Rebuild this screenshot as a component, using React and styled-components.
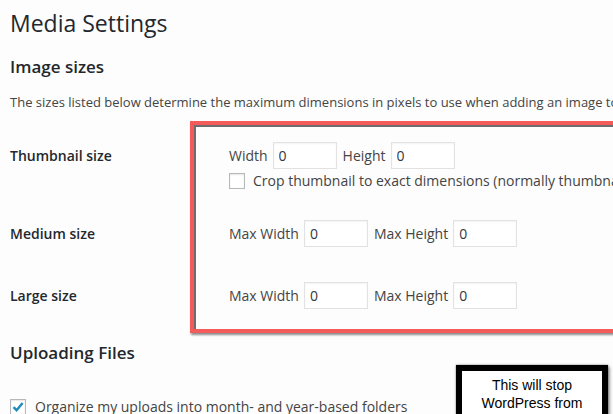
import React from "react";
import styled, { createGlobalStyle } from "styled-components";

const GlobalStyle = createGlobalStyle`
  html, body {
    margin: 0;
    padding: 0;
    overflow: hidden;
    background: #fdfdfd;
  }
  body {
    font-family: "Open Sans", "Liberation Sans", sans-serif;
    color: #444;
  }
`;

const Page = styled.div`
  position: relative;
  width: 900px;
  padding: 8px 0 0 10px;
  box-sizing: border-box;
`;

const Title = styled.h1`
  margin: 0;
  font-size: 23px;
  line-height: 30px;
  font-weight: 400;
  color: #23282d;
`;

const SectionTitle = styled.h2`
  margin: ${(p) => p.$mt}px 0 0;
  font-size: 17px;
  line-height: 24px;
  font-weight: 600;
  color: #23282d;
`;

const Description = styled.p`
  margin: 14px 0 0;
  font-size: 13px;
  line-height: 18px;
  white-space: nowrap;
`;

const FormGrid = styled.div`
  display: grid;
  grid-template-columns: 180px 1fr;
  margin-top: 10px;
`;

const Highlight = styled.div`
  grid-column: 2;
  grid-row: 1 / 4;
  border: 4px solid #f45b5b;
  box-shadow: inset 2px 2px 0 #6d6d6d, 1px 2px 2px rgba(0, 0, 0, 0.45);
  pointer-events: none;
`;

const RowLabel = styled.div`
  grid-column: 1;
  grid-row: ${(p) => p.$row};
  margin-top: ${(p) => p.$top}px;
  font-size: 14px;
  line-height: 27px;
  font-weight: 600;
  color: #23282d;
`;

const Cell = styled.div`
  grid-column: 2;
  grid-row: ${(p) => p.$row};
  padding: ${(p) => p.$pt}px 0 ${(p) => p.$pb}px 39px;
  display: flex;
  flex-direction: column;
  gap: 4px;
`;

const FieldLine = styled.div`
  display: flex;
  align-items: center;
  font-size: 14px;
  line-height: 27px;
  color: #444;
`;

const SizeInput = styled.input`
  box-sizing: border-box;
  width: 64px;
  height: 27px;
  margin: 0 6px 0 5px;
  padding: 0 5px;
  border: 1px solid #e2e2e2;
  box-shadow: inset 0 1px 2px rgba(0, 0, 0, 0.05);
  background: #fff;
  font-family: "Open Sans", sans-serif;
  font-size: 14px;
  color: #32373c;
  outline: none;
`;

const CheckLine = styled.label`
  display: flex;
  align-items: center;
  gap: ${(p) => p.$gap}px;
  font-size: 14px;
  line-height: 16px;
  color: #444;
  white-space: nowrap;
  margin-top: ${(p) => p.$mt || 0}px;
`;

const Box = styled.span`
  box-sizing: border-box;
  width: 16px;
  height: 16px;
  flex: none;
  border: 1px solid #b4b9be;
  background: #fff;
  box-shadow: inset 0 1px 2px rgba(0, 0, 0, 0.1);
  display: flex;
  align-items: center;
  justify-content: center;
`;

const Callout = styled.div`
  position: absolute;
  left: 456px;
  top: 365px;
  width: 152px;
  height: 120px;
  box-sizing: border-box;
  border: 6px solid #000;
  background: #fff;
  box-shadow: 0 0 2px rgba(0, 0, 0, 0.5), 2px 2px 3px rgba(0, 0, 0, 0.35);
  padding-top: 5px;
  text-align: center;
  font-family: "Liberation Sans", Arial, sans-serif;
  font-size: 14px;
  line-height: 18px;
  color: #000;
`;

function Checkbox({ checked }) {
  return (
    <Box>
      {checked && (
        <svg width="14" height="14" viewBox="0 0 14 14">
          <path d="M2.5 7.2 L5.6 10.2 L11.6 3" fill="none" stroke="#1e8cbe" strokeWidth="2.4" strokeLinecap="butt" />
        </svg>
      )}
    </Box>
  );
}

export default function App() {
  return (
    <>
      <GlobalStyle />
      <Page>
        <Title>Media Settings</Title>
        <SectionTitle $mt={17}>Image sizes</SectionTitle>
        <Description>
          The sizes listed below determine the maximum dimensions in pixels to use when adding an image to the Media Library.
        </Description>
        <FormGrid>
          <Highlight />
          <RowLabel $row={1} $top={21}>Thumbnail size</RowLabel>
          <Cell $row={1} $pt={21} $pb={16}>
            <FieldLine>
              Width<SizeInput defaultValue="0" />Height<SizeInput defaultValue="0" />
            </FieldLine>
            <CheckLine $gap={8}>
              <Checkbox />
              Crop thumbnail to exact dimensions (normally thumbnails are proportional)
            </CheckLine>
          </Cell>
          <RowLabel $row={2} $top={15}>Medium size</RowLabel>
          <Cell $row={2} $pt={15} $pb={20}>
            <FieldLine>
              Max Width<SizeInput defaultValue="0" />Max Height<SizeInput defaultValue="0" />
            </FieldLine>
          </Cell>
          <RowLabel $row={3} $top={15}>Large size</RowLabel>
          <Cell $row={3} $pt={15} $pb={24}>
            <FieldLine>
              Max Width<SizeInput defaultValue="0" />Max Height<SizeInput defaultValue="0" />
            </FieldLine>
          </Cell>
        </FormGrid>
        <SectionTitle $mt={8}>Uploading Files</SectionTitle>
        <CheckLine $gap={9} $mt={34}>
          <Checkbox checked />
          Organize my uploads into month- and year-based folders
        </CheckLine>
        <Callout>
          This will stop
          <br />
          WordPress from
        </Callout>
      </Page>
    </>
  );
}
